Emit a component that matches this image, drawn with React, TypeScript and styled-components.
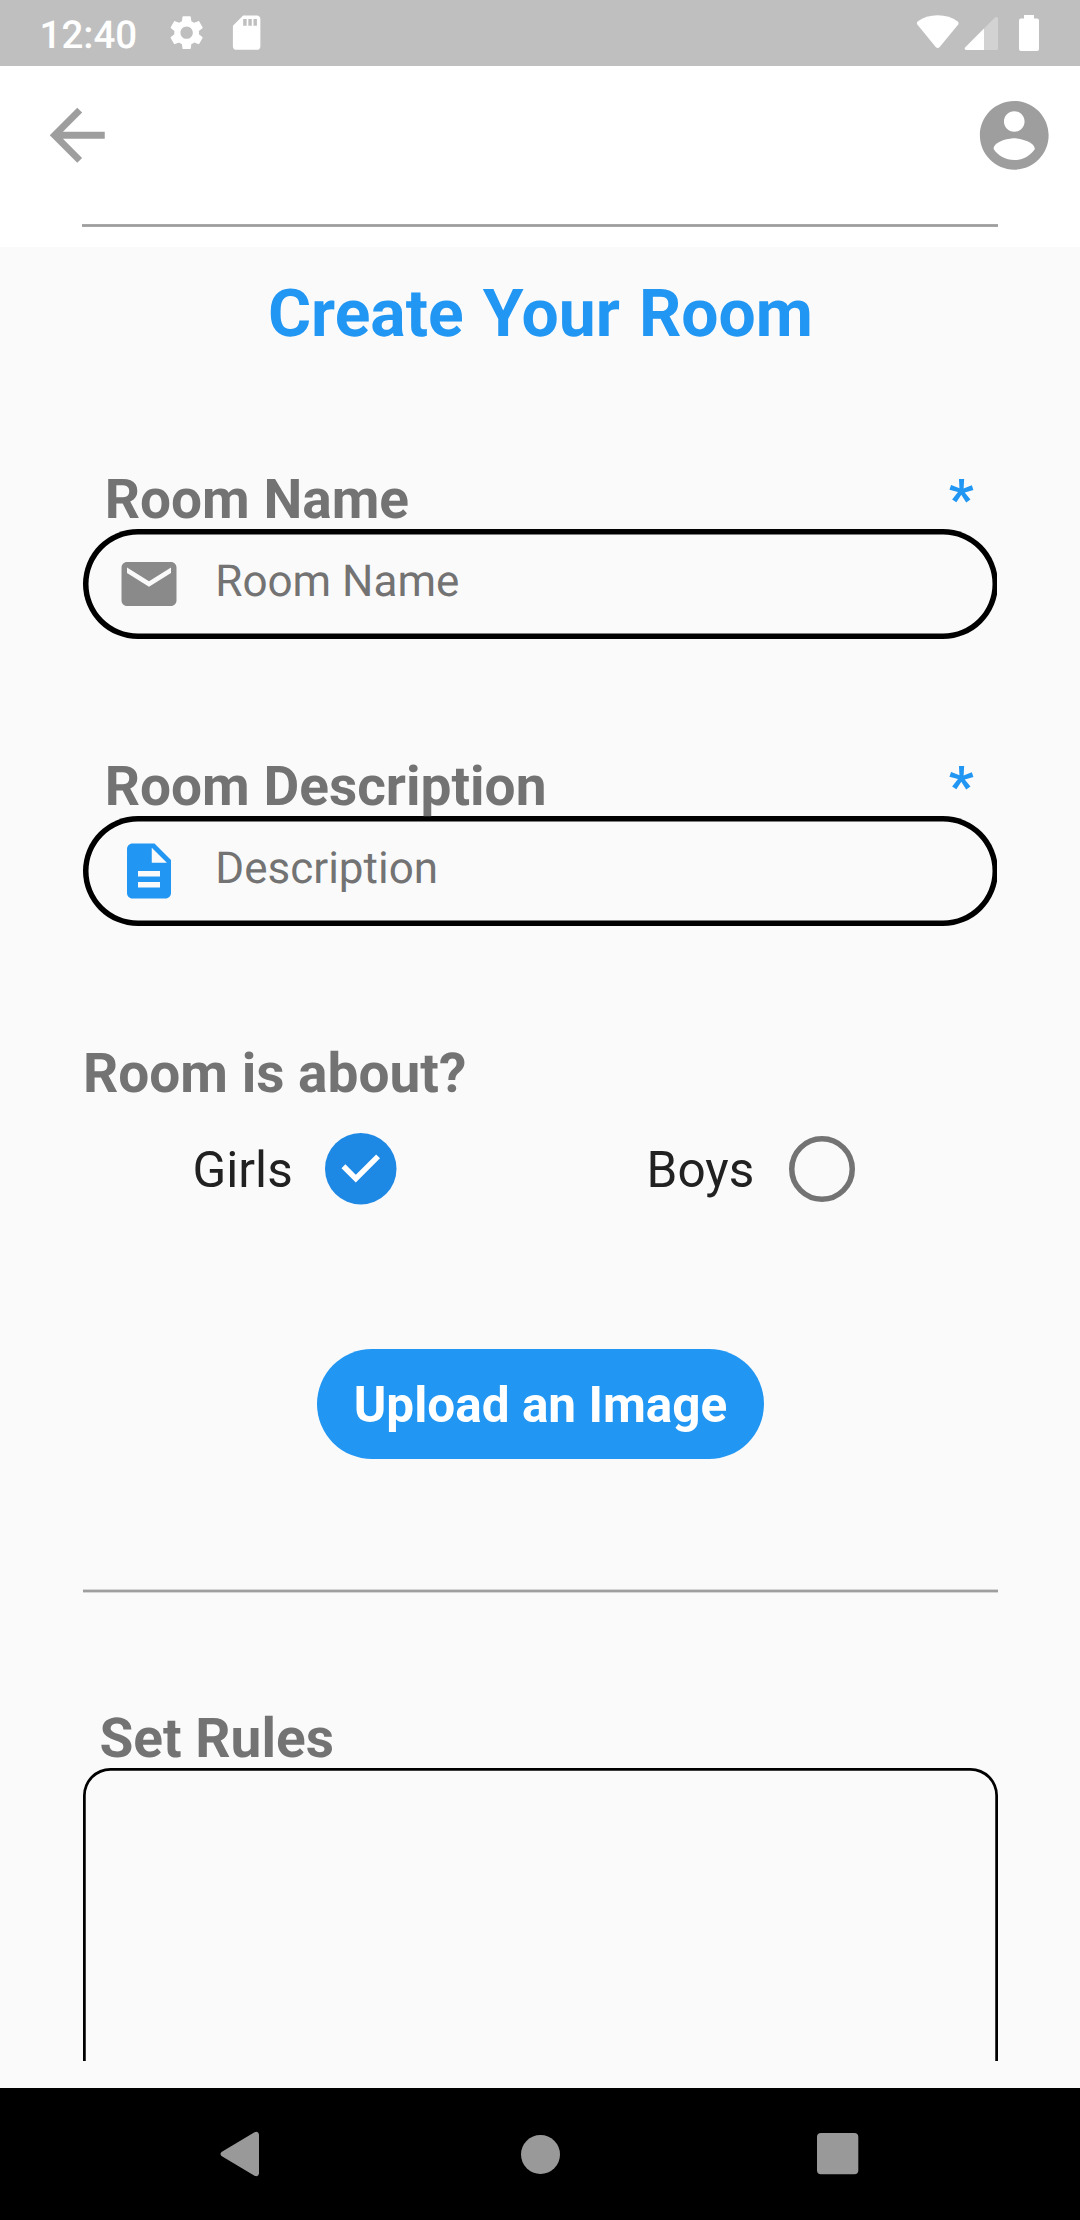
import React, { useState } from "react";
import styled, { createGlobalStyle } from "styled-components";

const GlobalStyle = createGlobalStyle`
  * { box-sizing: border-box; }
  body { margin: 0; background: #fafafa; }
  button { border: 0; padding: 0; background: none; font: inherit; color: inherit; }
`;

const Screen = styled.div`
  display: flex;
  flex-direction: column;
  width: 1080px;
  height: 2220px;
  overflow: hidden;
  background: #fafafa;
  font-family: Roboto, "Liberation Sans", sans-serif;
  text-rendering: geometricPrecision;
`;

const StatusBar = styled.div`
  display: flex;
  align-items: center;
  height: 66px;
  padding: 0 41px 0 39.5px;
  background: #bfbfbf;
  color: #fff;
`;

const Clock = styled.span`
  width: 126px;
  padding-top: 5px;
  font-size: 38.5px;
  font-weight: 500;
  line-height: 61px;
`;

const StatusIcons = styled.div`
  display: flex;
  align-items: center;
  gap: 19.5px;
`;

const SystemIcons = styled.svg`
  margin-left: auto;
  display: block;
`;

const AppBar = styled.header`
  height: 181px;
  padding-top: 28px;
  background: #fff;
`;

const Toolbar = styled.div`
  display: flex;
  justify-content: space-between;
  align-items: center;
  height: 81.5px;
  padding: 0 24.75px 0 36px;
`;

const IconButton = styled.button`
  display: flex;
  color: #9e9e9e;
`;

const HeaderRule = styled.div`
  height: 3px;
  margin: 48.5px 82px 0;
  background: linear-gradient(#a8a8a8 1px, #9e9e9e 1px, #9e9e9e 2px, #a8a8a8 2px);
`;

const Body = styled.main`
  display: flex;
  flex-direction: column;
  height: 1814px;
  width: 915px;
  margin: 0 82px 27px 83px;
  padding-top: 29px;
  overflow: hidden;
`;

const Title = styled.h1`
  margin: 0 0 114px;
  color: #2196f3;
  font-size: 66px;
  font-weight: 700;
  line-height: 77px;
  text-align: center;
  word-spacing: 2.75px;
`;

const Group = styled.section`
  margin-bottom: 115px;
`;

const LabelRow = styled.div<{ $inset: number }>`
  display: flex;
  justify-content: space-between;
  height: 62px;
  padding: 1px 24.4px 0 ${(p) => p.$inset}px;
  color: #737373;
  font-size: 55px;
  font-weight: 700;
  line-height: 64px;
`;

const Required = styled.span`
  color: #2196f3;
`;

const FieldClip = styled.div`
  width: 914px;
  overflow: hidden;
`;

const Field = styled.div`
  display: flex;
  align-items: center;
  gap: 33.3px;
  width: 915px;
  height: 110px;
  padding-left: 33px;
  border-radius: 55px;
  box-shadow: inset 0 0 0 5.5px #000;
`;

const Hint = styled.span`
  margin-top: -6px;
  color: #737373;
  font-size: 44px;
  line-height: 52px;
`;

const Question = styled.h2`
  margin: 1px 0 0;
  color: #737373;
  font-size: 55px;
  font-weight: 700;
  line-height: 64px;
`;

const Options = styled.div`
  display: flex;
  align-items: center;
  height: 71.5px;
  margin: 27px 0 144.5px;
`;

const Option = styled.button<{ $start: number }>`
  display: flex;
  align-items: center;
  width: 457px;
  height: 71.5px;
  padding-left: ${(p) => p.$start}px;
  color: #212121;
  font-size: 49.5px;
  line-height: 58px;
`;

const OptionText = styled.span<{ $width: number }>`
  width: ${(p) => p.$width}px;
  padding-top: 2px;
  text-align: left;
`;

const Mark = styled.svg`
  display: block;
  overflow: visible;
`;

const UploadButton = styled.button`
  align-self: center;
  flex: none;
  width: 447px;
  height: 110px;
  padding-top: 1px;
  border-radius: 55px;
  background: #2196f3;
  color: #fff;
  font-size: 49.5px;
  font-weight: 700;
  line-height: 109px;
  padding-top: 2px;
`;

const Rule = styled.div`
  flex: none;
  height: 4px;
  margin: 130px 0 113px;
  background: linear-gradient(#d6d6d6 1px, #9e9e9e 1px, #9e9e9e 3px, #d6d6d6 3px);
`;

const RulesBox = styled.div`
  flex: none;
  height: 420px;
  border-radius: 27.5px;
  box-shadow: inset 0 0 0 2.75px #000;
`;

const NavBar = styled.nav`
  display: flex;
  align-items: center;
  justify-content: space-between;
  flex: none;
  height: 132px;
  padding: 0 221px 0 220px;
  background: #000;
`;

const HomeGlyph = styled.svg`
  margin-left: 5px;
`;

type GlyphProps = { d: string; size: number; color?: string };
const Glyph = ({ d, size, color = "currentColor" }: GlyphProps) => (
  <svg width={size} height={size} viewBox="0 0 24 24" fill={color}>
    <path d={d} />
  </svg>
);

const paths = {
  settings:
    "M19.14 12.94c.04-.3.06-.61.06-.94 0-.32-.02-.64-.07-.94l2.03-1.58c.18-.14.23-.41.12-.61l-1.92-3.32c-.12-.22-.37-.29-.59-.22l-2.39.96c-.5-.38-1.03-.7-1.62-.94l-.36-2.54c-.04-.24-.24-.41-.48-.41h-3.84c-.24 0-.43.17-.47.41l-.36 2.54c-.59.24-1.13.57-1.62.94l-2.39-.96c-.22-.08-.47 0-.59.22L2.74 8.87c-.12.21-.08.47.12.61l2.03 1.58c-.05.3-.09.63-.09.94s.02.64.07.94l-2.03 1.58c-.18.14-.23.41-.12.61l1.92 3.32c.12.22.37.29.59.22l2.39-.96c.5.38 1.03.7 1.62.94l.36 2.54c.05.24.24.41.48.41h3.84c.24 0 .44-.17.47-.41l.36-2.54c.59-.24 1.13-.56 1.62-.94l2.39.96c.22.08.47 0 .59-.22l1.92-3.32c.12-.22.07-.47-.12-.61l-2.01-1.58zM12 15.6c-1.98 0-3.6-1.62-3.6-3.6s1.62-3.6 3.6-3.6 3.6 1.62 3.6 3.6-1.62 3.6-3.6 3.6z",
  sdCard:
    "M18 2h-8L4.02 8 4 20c0 1.1.9 2 2 2h12c1.1 0 2-.9 2-2V4c0-1.1-.9-2-2-2zm-6 6h-2V4h2v4zm3 0h-2V4h2v4zm3 0h-2V4h2v4z",
  back: "M20 11H7.83l5.59-5.59L12 4l-8 8 8 8 1.41-1.41L7.83 13H20v-2z",
  account:
    "M12 2C6.48 2 2 6.48 2 12s4.48 10 10 10 10-4.48 10-10S17.52 2 12 2zm0 3c1.66 0 3 1.34 3 3s-1.34 3-3 3-3-1.34-3-3 1.34-3 3-3zm0 14.2c-2.5 0-4.71-1.28-6-3.22.03-1.99 4-3.08 6-3.08 1.99 0 5.97 1.09 6 3.08-1.29 1.94-3.5 3.22-6 3.22z",
  mail: "M20 4H4c-1.1 0-1.99.9-1.99 2L2 18c0 1.1.9 2 2 2h16c1.1 0 2-.9 2-2V6c0-1.1-.9-2-2-2zm0 4l-8 5-8-5V6l8 5 8-5v2z",
  document:
    "M14 2H6c-1.1 0-1.99.9-1.99 2L4 20c0 1.1.89 2 1.99 2H18c1.1 0 2-.9 2-2V8l-6-6zm2 16H8v-2h8v2zm0-4H8v-2h8v2zm-3-5V3.5L18.5 9H13z",
};

const CheckedMark = () => (
  <Mark width="71.5" height="71.5" viewBox="0 0 26 26">
    <circle cx="13" cy="13" r="13" fill="#1e88e5" />
    <path d="M6.7 12.1 L11.2 16.6 L19.3 8.5" fill="none" stroke="#fff" strokeWidth="2" />
  </Mark>
);

const EmptyMark = () => (
  <Mark width="66" height="66" viewBox="0 0 24 24">
    <circle cx="12" cy="12" r="11" fill="none" stroke="#737373" strokeWidth="2" />
  </Mark>
);

export default function App() {
  const [choice, setChoice] = useState("girls");
  return (
    <Screen>
      <GlobalStyle />
      <StatusBar>
        <Clock>12:40</Clock>
        <StatusIcons>
          <Glyph d={paths.settings} size={41.25} />
          <Glyph d={paths.sdCard} size={41.25} />
        </StatusIcons>
        <SystemIcons width="123" height="66" viewBox="916 0 123 66" fill="#fff">
          <path d="M917.3 24.6 Q916 23 917.6 21.6 Q926 15.3 937.7 15.3 Q949.5 15.3 957.8 21.6 Q959.3 23 958.2 24.6 L939.7 47 Q937.7 49.2 935.7 47 Z" />
          <path d="M984 28.6 V50 H966.5 Q963.5 49.6 965.3 47.3 Z" />
          <path
            d="M984 28.6 L995 17.6 Q997.8 15.8 998 18.5 V48.5 Q998 50 996.5 50 H984 Z"
            fillOpacity="0.3"
          />
          <path d="M1024 15 H1034 V18.5 H1037 Q1039 18.5 1039 20.5 V49 Q1039 51 1037 51 H1021 Q1019 51 1019 49 V20.5 Q1019 18.5 1021 18.5 H1024 Z" />
        </SystemIcons>
      </StatusBar>

      <AppBar>
        <Toolbar>
          <IconButton aria-label="Back">
            <Glyph d={paths.back} size={82.5} />
          </IconButton>
          <IconButton aria-label="Account">
            <Glyph d={paths.account} size={82.5} />
          </IconButton>
        </Toolbar>
        <HeaderRule />
      </AppBar>

      <Body>
        <Title>Create Your Room</Title>

        <Group>
          <LabelRow $inset={21.8}>
            Room Name <Required>*</Required>
          </LabelRow>
          <FieldClip>
            <Field>
              <Glyph d={paths.mail} size={66} color="#8a8a8a" />
              <Hint>Room Name</Hint>
            </Field>
          </FieldClip>
        </Group>

        <Group>
          <LabelRow $inset={21.8}>
            Room Description <Required>*</Required>
          </LabelRow>
          <FieldClip>
            <Field>
              <Glyph d={paths.document} size={66} color="#2196f3" />
              <Hint>Description</Hint>
            </Field>
          </FieldClip>
        </Group>

        <Question>Room is about?</Question>
        <Options>
          <Option $start={109.6} onClick={() => setChoice("girls")}>
            <OptionText $width={132.4}>Girls</OptionText>
            {choice === "girls" ? <CheckedMark /> : <EmptyMark />}
          </Option>
          <Option $start={106.6} onClick={() => setChoice("boys")}>
            <OptionText $width={142.4}>Boys</OptionText>
            {choice === "boys" ? <CheckedMark /> : <EmptyMark />}
          </Option>
        </Options>

        <UploadButton>Upload an Image</UploadButton>
        <Rule />

        <LabelRow $inset={16.5}>Set Rules</LabelRow>
        <RulesBox />
      </Body>

      <NavBar>
        <svg width="39" height="46" viewBox="0 0 39 46" fill="#999">
          <path d="M1.5 21 L34.5 1.3 Q38.5 -0.2 39 3.5 V42.5 Q38.5 46.2 34.5 44.7 L1.5 25 Q-0.5 23 1.5 21 Z" />
        </svg>
        <HomeGlyph width="39" height="39" viewBox="0 0 39 39" fill="#999">
          <circle cx="19.5" cy="19.5" r="19.5" />
        </HomeGlyph>
        <svg width="42" height="42" viewBox="0 0 42 42" fill="#999">
          <rect x="0" y="0" width="41.3" height="41.3" rx="4" />
        </svg>
      </NavBar>
    </Screen>
  );
}
